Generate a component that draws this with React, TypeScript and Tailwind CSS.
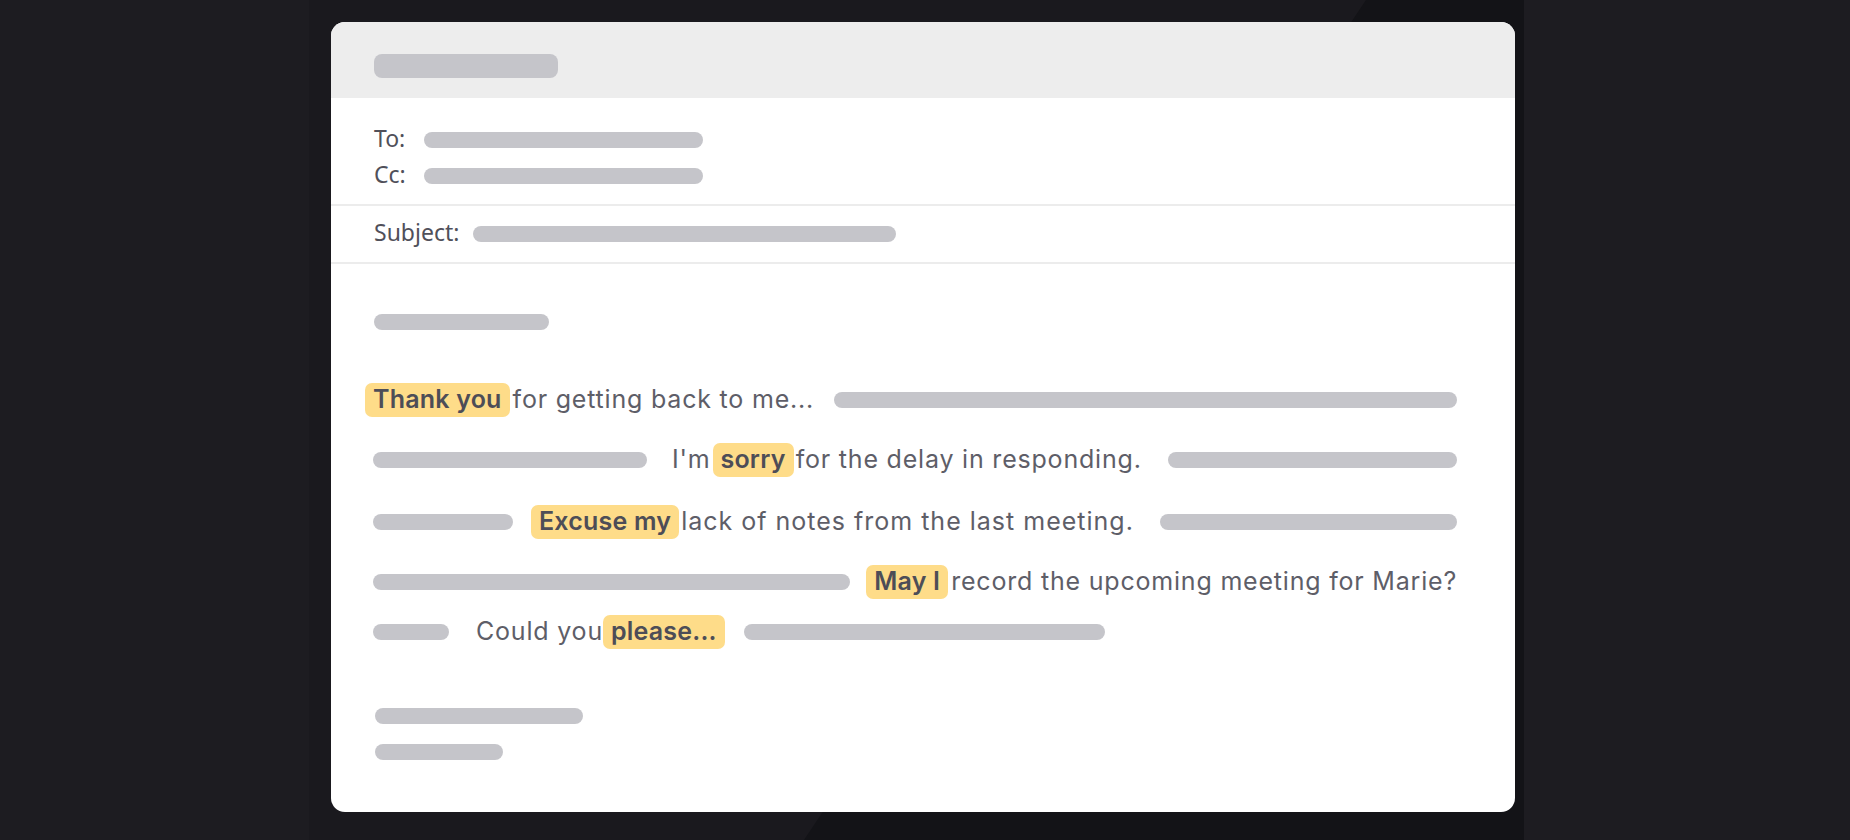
const bar = "h-4 rounded-full bg-[#c5c5ca] shrink-0";

function Hl({ children }: { children: React.ReactNode }) {
  return (
    <span className="inline-flex h-[34px] items-center rounded-[7px] bg-[#fedc89] px-2 font-semibold tracking-[0.2px] text-[#4d4d57]">
      {children}
    </span>
  );
}

export default function App() {
  return (
    <div className="flex h-[840px] w-full overflow-hidden bg-[#1d1c21]">
      {/* backdrop panel with the dark diagonal shape */}
      <div className="relative ml-[309px] h-full w-[1215px] bg-[#1a191e]">
        <svg className="absolute inset-0" width="1215" height="840" viewBox="0 0 1215 840">
          <polygon points="1057,0 1215,0 1215,840 495,840" fill="#131317" />
        </svg>

        <div className="relative ml-[22px] mt-[22px] flex h-[790px] w-[1184px] flex-col overflow-hidden rounded-[14px] bg-white font-['Inter',sans-serif]">
          {/* title band */}
          <div className="h-[76px] shrink-0 bg-[#ededed] pl-[43px] pt-[32px]">
            <div className="h-6 w-[184px] rounded-lg bg-[#c5c5ca]" />
          </div>

          {/* recipients */}
          <div className="flex flex-col gap-3 border-b-2 border-[#ececec] pb-4 pl-[43px] pt-[30px] font-['Noto_Sans',sans-serif] text-[23px] text-[#50505a]">
            <div className="flex h-6 items-center">
              <span className="w-[50px] pb-1">To:</span>
              <div className={`${bar} w-[279px]`} />
            </div>
            <div className="flex h-6 items-center">
              <span className="w-[50px] pb-1">Cc:</span>
              <div className={`${bar} w-[279px]`} />
            </div>
          </div>

          <div className="flex h-[58px] items-center border-b-2 border-[#ececec] pl-[43px] font-['Noto_Sans',sans-serif] text-[23px] text-[#50505a]">
            <span className="mr-[14px] pb-1">Subject:</span>
            <div className={`${bar} w-[423px]`} />
          </div>

          {/* body */}
          <div className="flex flex-col pl-[42px] pr-[58px] pt-[50px] text-[25px] tracking-[0.8px] text-[#5e5e68]">
            <div className={`${bar} ml-px w-[175px]`} />

            <div className="mt-[53px] flex h-[34px] items-center">
              <span className="-ml-2">
                <Hl>Thank you</Hl>
              </span>
              <span className="ml-[3px] whitespace-nowrap">for getting back to me...</span>
              <div className={`${bar} ml-5 flex-1`} />
            </div>

            <div className="mt-[26px] flex h-[34px] items-center">
              <div className={`${bar} w-[274px]`} />
              <span className="ml-[25px] whitespace-nowrap">I'm</span>
              <span className="ml-[2px]">
                <Hl>sorry</Hl>
              </span>
              <span className="ml-[2px] whitespace-nowrap">for the delay in responding.</span>
              <div className={`${bar} ml-[26px] flex-1`} />
            </div>

            <div className="mt-[28px] flex h-[34px] items-center">
              <div className={`${bar} w-[140px]`} />
              <span className="ml-[18px]">
                <Hl>Excuse my</Hl>
              </span>
              <span className="ml-[2px] whitespace-nowrap tracking-[1px]">lack of notes from the last meeting.</span>
              <div className={`${bar} ml-[26px] flex-1`} />
            </div>

            <div className="mt-[26px] flex h-[34px] items-center">
              <div className={`${bar} flex-1`} />
              <span className="ml-4">
                <Hl>May I</Hl>
              </span>
              <span className="ml-[3px] whitespace-nowrap">record the upcoming meeting for Marie?</span>
            </div>

            <div className="mt-4 flex h-[34px] items-center">
              <div className={`${bar} w-[76px]`} />
              <span className="ml-[27px] whitespace-nowrap">Could you</span>
              <span>
                <Hl>please...</Hl>
              </span>
              <div className={`${bar} ml-[19px] w-[361px]`} />
            </div>

            <div className={`${bar} ml-[2px] mt-[59px] w-[208px]`} />
            <div className={`${bar} ml-[2px] mt-5 w-[128px]`} />
          </div>
        </div>
      </div>
    </div>
  );
}
